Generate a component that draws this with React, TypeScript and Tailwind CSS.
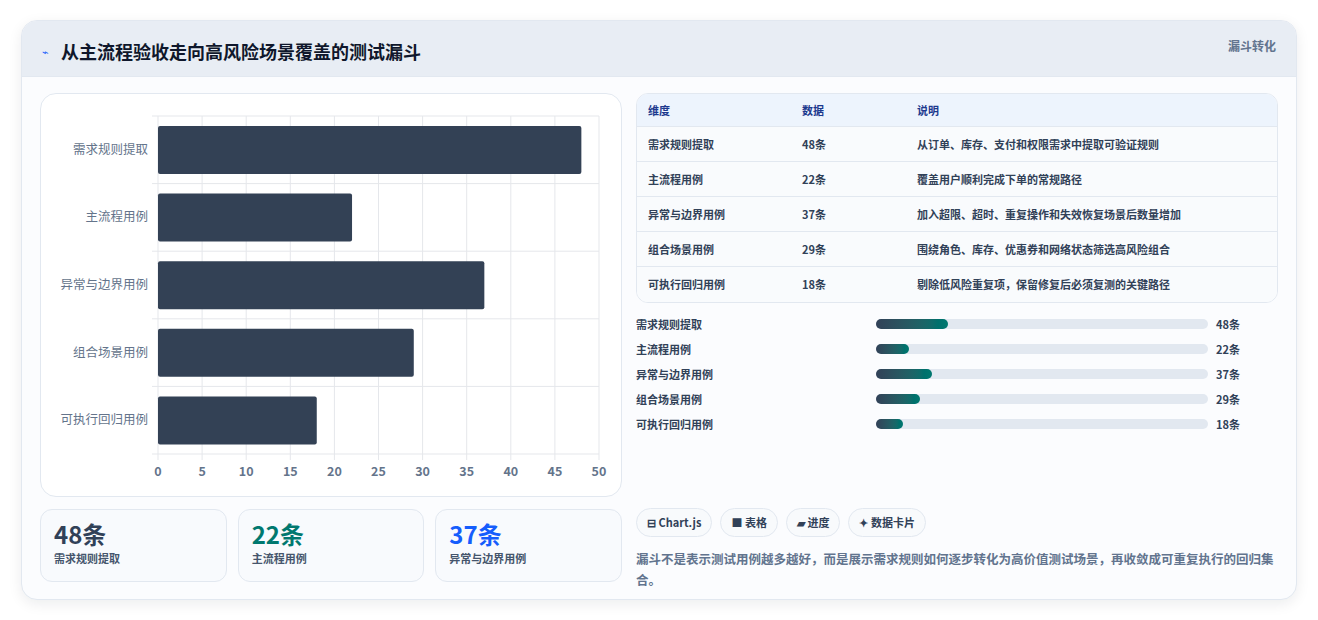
import React from "react";

const rows = [
  { n: "需求规则提取", v: 48, d: "从订单、库存、支付和权限需求中提取可验证规则" },
  { n: "主流程用例", v: 22, d: "覆盖用户顺利完成下单的常规路径" },
  { n: "异常与边界用例", v: 37, d: "加入超限、超时、重复操作和失效恢复场景后数量增加" },
  { n: "组合场景用例", v: 29, d: "围绕角色、库存、优惠券和网络状态筛选高风险组合" },
  { n: "可执行回归用例", v: 18, d: "剔除低风险重复项，保留修复后必须复测的关键路径" },
];
const F = { fontFamily: '"Noto Sans CJK SC","Noto Sans",sans-serif' };

function Chart() {
  const x0 = 117, x1 = 558, yTop = 22, yBot = 360;
  const ticks = [0, 5, 10, 15, 20, 25, 30, 35, 40, 45, 50];
  const sx = (v: number) => x0 + (v / 50) * (x1 - x0);
  const bh = (yBot - yTop) / 5;
  return (
    <svg width="580" height="400" style={F}>
      {ticks.map((t) => (
        <line key={t} x1={sx(t)} x2={sx(t)} y1={yTop} y2={yBot + 6} stroke="#e5e7eb" />
      ))}
      {rows.map((r, i) => (
        <line key={i} x1={x0 - 6} x2={x1} y1={yTop + bh * i} y2={yTop + bh * i} stroke="#e5e7eb" />
      ))}
      <line x1={x0 - 6} x2={x1} y1={yBot} y2={yBot} stroke="#e5e7eb" />
      {rows.map((r, i) => (
        <g key={r.n}>
          <rect x={x0} y={yTop + bh * i + 10} width={sx(r.v) - x0} height={48} rx="2" fill="#334155" />
          <text x={x0 - 10} y={yTop + bh * i + bh / 2 + 4} textAnchor="end" fontSize="12.5" fill="#64748b">{r.n}</text>
        </g>
      ))}
      {ticks.map((t) => (
        <text key={t} x={sx(t)} y={yBot + 22} textAnchor="middle" fontSize="12.5" fill="#64748b" fontWeight="600">{t}</text>
      ))}
    </svg>
  );
}

export default function App() {
  return (
    <div className="w-[1318px] h-[620px] bg-white pt-5 px-[21px]" style={F}>
      <div className="h-[580px] rounded-2xl border border-slate-200 bg-[#fbfcfe] shadow-[0_4px_14px_rgba(15,23,42,0.08)] overflow-hidden">
        <div className="h-[56px] bg-[#e8edf4] border-b border-slate-200 flex items-start justify-between pl-5 pr-5">
          <div className="flex items-center gap-3 mt-[17px]">
            <span className="text-[11px] text-blue-600">⌁</span>
            <span className="text-[18px] font-bold text-slate-900">从主流程验收走向高风险场景覆盖的测试漏斗</span>
          </div>
          <span className="mt-[16px] text-[12px] font-bold text-slate-500">漏斗转化</span>
        </div>
        <div className="flex gap-[14px] pt-4 pl-[18px] pr-[18px]">
          <div className="w-[582px] flex flex-col gap-3">
            <div className="h-[404px] rounded-2xl border border-slate-200 bg-white">
              <Chart />
            </div>
            <div className="flex gap-[11px]">
              {[["48条", "text-slate-700"], ["22条", "text-teal-700"], ["37条", "text-blue-600"]].map(([v, c], i) => (
                <div key={v} className="flex-1 h-[73px] rounded-xl border border-slate-200 bg-[#f8fafd] px-[13px] pt-[8px]">
                  <div className={`text-[24px] font-bold leading-8 ${c}`}>{v}</div>
                  <div className="text-[11px] font-semibold text-slate-600">{rows[i].n}</div>
                </div>
              ))}
            </div>
          </div>
          <div className="flex-1 flex flex-col">
            <div className="rounded-xl border border-slate-200 overflow-hidden bg-white text-[11px] font-semibold text-slate-700">
              <div className="flex h-[33px] items-center bg-[#edf4fd] text-blue-900 border-b border-slate-200 px-[11px]">
                <span className="w-[154px]">维度</span><span className="w-[115px]">数据</span><span>说明</span>
              </div>
              {rows.map((r, i) => (
                <div key={r.n} className={`flex h-[35px] items-center px-[11px] bg-[#f9fbfd] ${i < 4 ? "border-b border-slate-200" : ""}`}>
                  <span className="w-[154px]">{r.n}</span><span className="w-[115px]">{r.v}条</span><span>{r.d}</span>
                </div>
              ))}
            </div>
            <div className="flex flex-col gap-[7px] mt-[12px]">
              {rows.map((r) => (
                <div key={r.n} className="flex items-center h-[18px] text-[11px] font-semibold text-slate-700">
                  <span className="w-[240px]">{r.n}</span>
                  <div className="w-[332px] h-[10px] rounded-full bg-slate-200">
                    <div className="h-full rounded-full bg-gradient-to-r from-slate-700 to-teal-700" style={{ width: r.v * 1.5 }} />
                  </div>
                  <span className="ml-[8px]">{r.v}条</span>
                </div>
              ))}
            </div>
            <div className="mt-[75px] flex gap-2 text-[11px] font-semibold text-slate-700">
              {["⊟ Chart.js", "■ 表格", "▰ 进度", "✦ 数据卡片"].map((t) => (
                <span key={t} className="h-[29px] px-[10px] rounded-full border border-slate-200 bg-[#f8fafc] flex items-center">{t}</span>
              ))}
            </div>
            <p className="mt-[11px] text-[12.5px] leading-[21px] font-semibold text-slate-500">漏斗不是表示测试用例越多越好，而是展示需求规则如何逐步转化为高价值测试场景，再收敛成可重复执行的回归集合。</p>
          </div>
        </div>
      </div>
    </div>
  );
}
